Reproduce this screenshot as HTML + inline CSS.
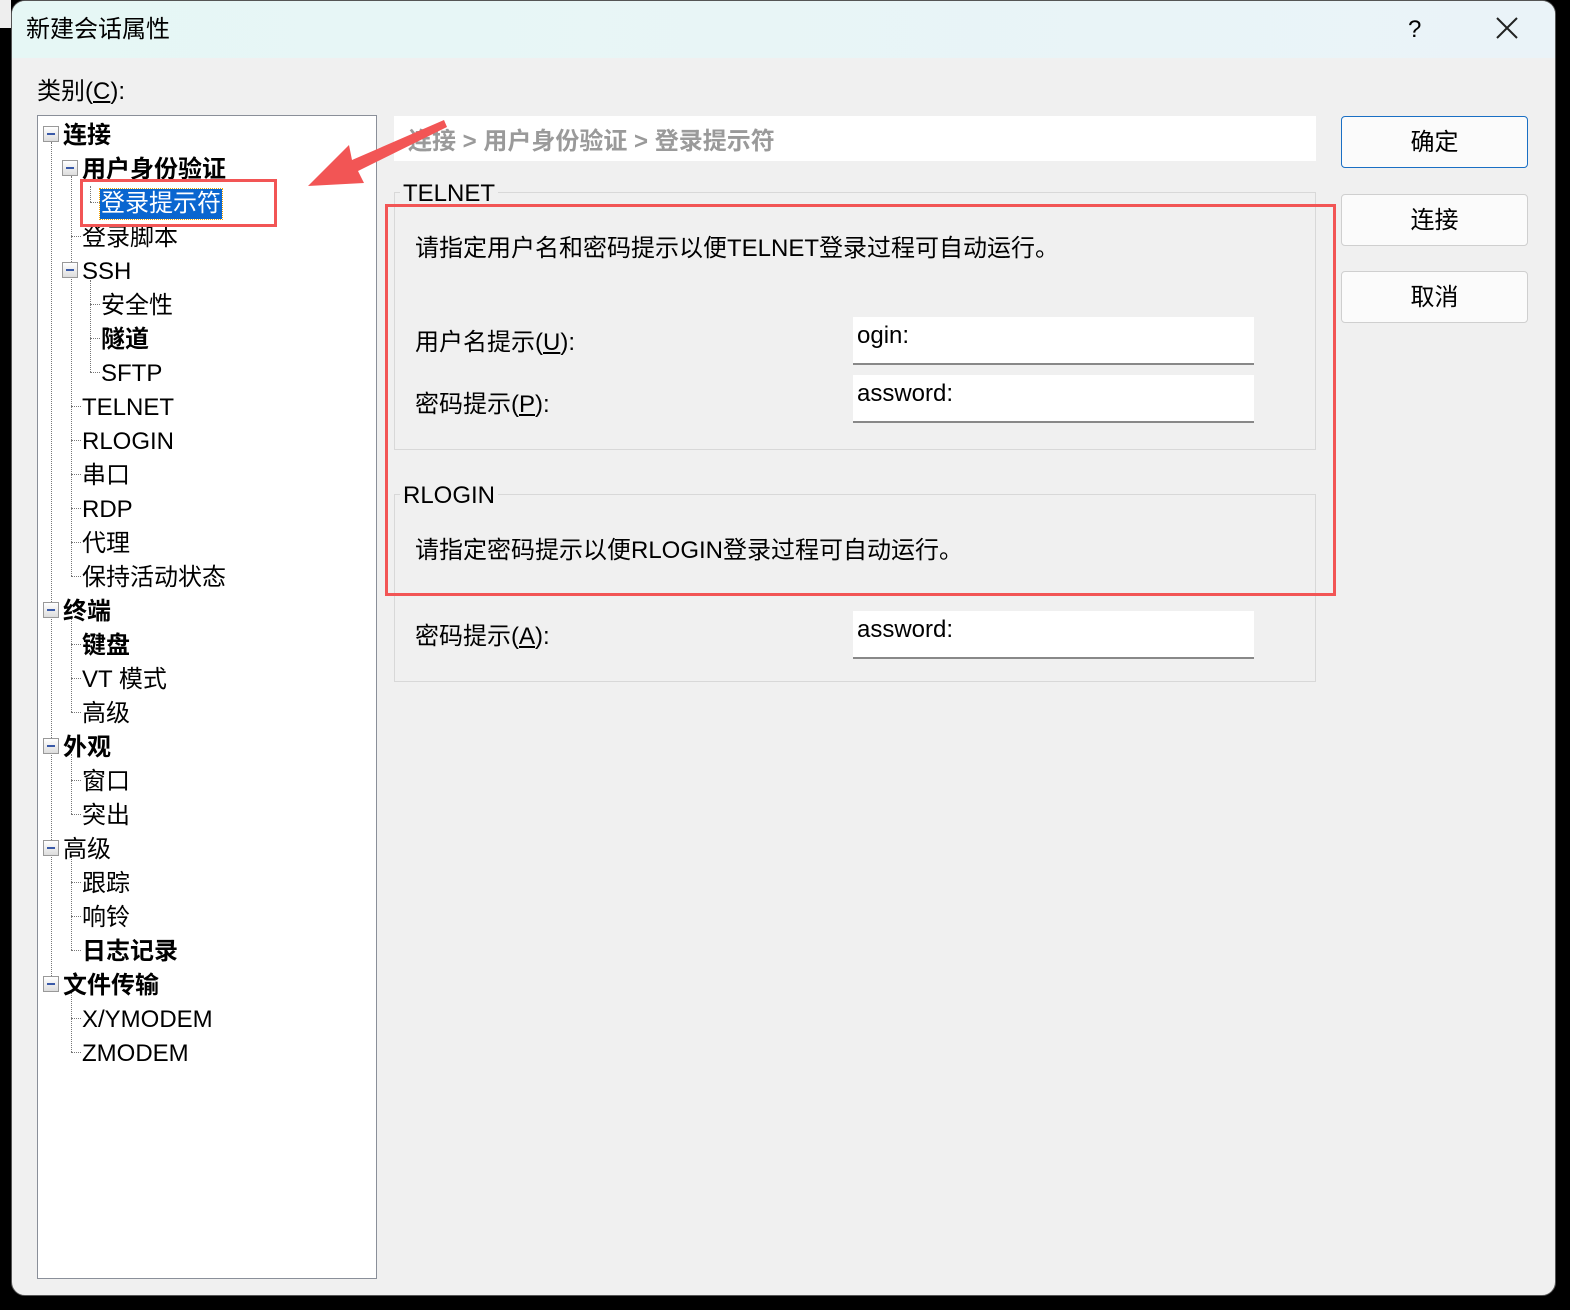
<!DOCTYPE html>
<html><head><meta charset="utf-8"><style>
*{margin:0;padding:0;box-sizing:border-box}
body{width:1570px;height:1310px;background:#000;position:relative;overflow:hidden;font-family:"Liberation Sans","Noto Sans CJK SC",sans-serif;font-size:24px;color:#000}
.win{position:absolute;left:11px;top:0;width:1545px;height:1296px;background:#f0f0f0;border-radius:14px;border:1px solid #555;overflow:hidden}
.title{position:absolute;left:0;top:0;width:100%;height:57px;background:linear-gradient(90deg,#e6f7f5,#eaf3f8)}
.a{position:absolute;white-space:nowrap;line-height:30px;margin-top:2px}
.b{font-weight:bold}
.tree{position:absolute;left:37px;top:115px;width:340px;height:1164px;background:#fff;border:1px solid #8a8f99}
.box{position:absolute;width:16px;height:16px;border:1px solid #999;background:linear-gradient(#fff,#ddd)}
.box:after{content:"";position:absolute;left:3px;top:6px;width:8px;height:2px;background:#3a5aa8}
.vl{position:absolute;border-left:1px dotted #777;width:0}
.hl{position:absolute;border-top:1px dotted #777;height:0;width:10px}
.grp{position:absolute;border:1px solid #d8d8d8}
.inp{position:absolute;background:#fff;border-bottom:2px solid #888;width:401px;height:48px;padding-left:4px;line-height:38px}
.btn{position:absolute;left:1341px;width:187px;height:52px;background:#fbfbfb;border:1px solid #cfcfcf;border-radius:4px;text-align:center;line-height:52px}
</style></head><body>
<div style="position:absolute;left:0;top:0;width:11px;height:28px;background:#eee"></div>
<div class="win">
<div class="title"></div>
</div>
<div class="a" style="left:26px;top:13px">新建会话属性</div>
<div class="a" style="left:1408px;top:13px">?</div>
<svg style="position:absolute;left:1496px;top:17px" width="22" height="22"><path d="M1 1L21 21M21 1L1 21" stroke="#222" stroke-width="2"/></svg>
<div class="a" style="left:37px;top:75px">类别(<u>C</u>):</div>

<div class="tree"></div>
<div class="vl" style="left:51px;top:142px;height:842px"></div>
<div class="vl" style="left:71px;top:176px;height:400px"></div>
<div class="vl" style="left:90px;top:186px;height:16px"></div>
<div class="vl" style="left:90px;top:280px;height:92px"></div>
<div class="vl" style="left:71px;top:618px;height:94px"></div>
<div class="vl" style="left:71px;top:754px;height:60px"></div>
<div class="vl" style="left:71px;top:856px;height:94px"></div>
<div class="vl" style="left:71px;top:992px;height:60px"></div>
<div class="hl" style="left:90px;top:202px"></div>
<div class="hl" style="left:71px;top:236px"></div>
<div class="hl" style="left:90px;top:304px"></div><div class="hl" style="left:90px;top:338px"></div><div class="hl" style="left:90px;top:372px"></div>
<div class="hl" style="left:71px;top:406px"></div><div class="hl" style="left:71px;top:440px"></div><div class="hl" style="left:71px;top:474px"></div><div class="hl" style="left:71px;top:508px"></div><div class="hl" style="left:71px;top:542px"></div><div class="hl" style="left:71px;top:576px"></div>
<div class="hl" style="left:71px;top:644px"></div><div class="hl" style="left:71px;top:678px"></div><div class="hl" style="left:71px;top:712px"></div>
<div class="hl" style="left:71px;top:780px"></div><div class="hl" style="left:71px;top:814px"></div>
<div class="hl" style="left:71px;top:882px"></div><div class="hl" style="left:71px;top:916px"></div><div class="hl" style="left:71px;top:950px"></div>
<div class="hl" style="left:71px;top:1018px"></div><div class="hl" style="left:71px;top:1052px"></div>

<div class="box" style="left:43px;top:126px"></div>
<div class="box" style="left:62px;top:160px"></div>
<div class="box" style="left:62px;top:262px"></div>
<div class="box" style="left:43px;top:602px"></div>
<div class="box" style="left:43px;top:738px"></div>
<div class="box" style="left:43px;top:840px"></div>
<div class="box" style="left:43px;top:976px"></div>

<div class="a b" style="left:63px;top:119px">连接</div>
<div class="a b" style="left:82px;top:153px">用户身份验证</div>
<div class="a" style="left:100px;top:187px;background:#0a66d0;color:#fff;outline:1px dotted #f0a000;padding:0 1px">登录提示符</div>
<div class="a" style="left:82px;top:221px">登录脚本</div>
<div class="a" style="left:82px;top:255px">SSH</div>
<div class="a" style="left:101px;top:289px">安全性</div>
<div class="a b" style="left:101px;top:323px">隧道</div>
<div class="a" style="left:101px;top:357px">SFTP</div>
<div class="a" style="left:82px;top:391px">TELNET</div>
<div class="a" style="left:82px;top:425px">RLOGIN</div>
<div class="a" style="left:82px;top:459px">串口</div>
<div class="a" style="left:82px;top:493px">RDP</div>
<div class="a" style="left:82px;top:527px">代理</div>
<div class="a" style="left:82px;top:561px">保持活动状态</div>
<div class="a b" style="left:63px;top:595px">终端</div>
<div class="a b" style="left:82px;top:629px">键盘</div>
<div class="a" style="left:82px;top:663px">VT 模式</div>
<div class="a" style="left:82px;top:697px">高级</div>
<div class="a b" style="left:63px;top:731px">外观</div>
<div class="a" style="left:82px;top:765px">窗口</div>
<div class="a" style="left:82px;top:799px">突出</div>
<div class="a" style="left:63px;top:833px">高级</div>
<div class="a" style="left:82px;top:867px">跟踪</div>
<div class="a" style="left:82px;top:901px">响铃</div>
<div class="a b" style="left:82px;top:935px">日志记录</div>
<div class="a b" style="left:63px;top:969px">文件传输</div>
<div class="a" style="left:82px;top:1003px">X/YMODEM</div>
<div class="a" style="left:82px;top:1037px">ZMODEM</div>

<div style="position:absolute;left:80px;top:179px;width:197px;height:48px;border:3px solid #f25555"></div>

<div style="position:absolute;left:394px;top:116px;width:922px;height:45px;background:#fff"></div>
<div class="a b" style="left:408px;top:125px;color:#9a9a9a">连接 &gt; 用户身份验证 &gt; 登录提示符</div>

<div class="grp" style="left:394px;top:192px;width:922px;height:258px"></div>
<div class="a" style="left:400px;top:177px;background:#f0f0f0;padding:0 3px">TELNET</div>
<div class="a" style="left:415px;top:232px">请指定用户名和密码提示以便TELNET登录过程可自动运行。</div>
<div class="a" style="left:415px;top:326px">用户名提示(<u>U</u>):</div>
<div class="inp" style="left:853px;top:317px">ogin:</div>
<div class="a" style="left:415px;top:388px">密码提示(<u>P</u>):</div>
<div class="inp" style="left:853px;top:375px">assword:</div>

<div class="grp" style="left:394px;top:494px;width:922px;height:188px"></div>
<div class="a" style="left:400px;top:479px;background:#f0f0f0;padding:0 3px">RLOGIN</div>
<div class="a" style="left:415px;top:534px">请指定密码提示以便RLOGIN登录过程可自动运行。</div>
<div class="a" style="left:415px;top:620px">密码提示(<u>A</u>):</div>
<div class="inp" style="left:853px;top:611px">assword:</div>

<div style="position:absolute;left:385px;top:204px;width:951px;height:392px;border:3px solid #f25555"></div>

<div class="btn" style="top:116px;border-color:#1a6fc4">确定</div>
<div class="btn" style="top:194px">连接</div>
<div class="btn" style="top:271px">取消</div>

<svg style="position:absolute;left:0;top:0" width="1570" height="400"><polygon points="308,186 349,145 352,160 444,120 447,127 358,171 364,183" fill="#f25555"/></svg>
</body></html>
